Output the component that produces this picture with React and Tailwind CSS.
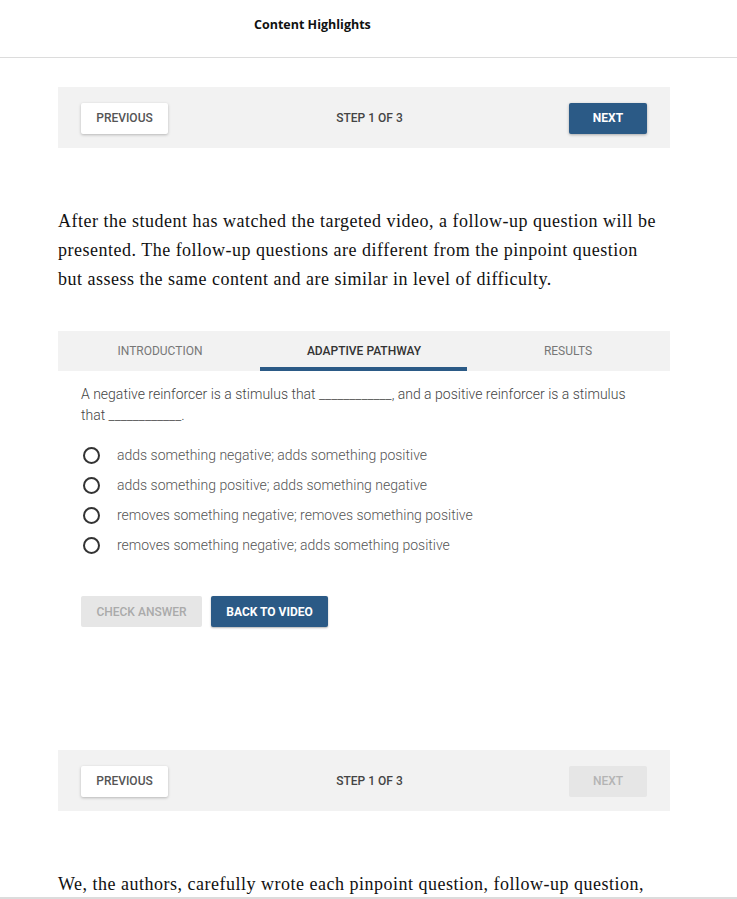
import React from 'react';

const ui = { fontFamily: 'Roboto, "Liberation Sans", sans-serif' };
const serif = { fontFamily: '"Liberation Serif", "DejaVu Serif", serif' };

const StepBar = ({ nextDisabled = false }) => (
  <div className="flex items-center justify-between bg-[#f2f2f2] h-[61px] px-[23px] pt-[1px]" style={ui}>
    <button className="h-[31px] w-[87px] bg-white text-[12px] font-medium text-[#555] shadow-[0_1px_3px_rgba(0,0,0,0.25)] rounded-[2px]">
      PREVIOUS
    </button>
    <span className="text-[12px] font-medium text-[#444] ml-[2px]">STEP 1 OF 3</span>
    {nextDisabled ? (
      <button className="h-[31px] w-[78px] bg-[#e6e6e6] text-[12px] font-medium text-[#b4b4b4] rounded-[2px]">
        NEXT
      </button>
    ) : (
      <button className="h-[31px] w-[78px] bg-[#2b5a86] text-[12px] font-bold text-white shadow-[0_1px_3px_rgba(0,0,0,0.3)] rounded-[2px]">
        NEXT
      </button>
    )}
  </div>
);

const options = [
  'adds something negative; adds something positive',
  'adds something positive; adds something negative',
  'removes something negative; removes something positive',
  'removes something negative; adds something positive'
];

const tabs = ['INTRODUCTION', 'ADAPTIVE PATHWAY', 'RESULTS'];

export default function App() {
  return (
    <div className="h-[899px] flex flex-col bg-white overflow-hidden">
      <div className="flex-1 overflow-hidden">
        {/* Header */}
        <div className="h-[58px] border-b border-[#dcdcdc] pl-[254px] pt-[11px]">
          <span className="text-[12.5px] font-bold text-[#111]" style={{ fontFamily: '"Open Sans", sans-serif' }}>
            Content Highlights
          </span>
        </div>

        <div className="ml-[58px] w-[612px]">
          <div className="mt-[29px]">
            <StepBar />
          </div>

          <p className="mt-[59px] text-[18px] leading-[29px] tracking-[0.5px] text-[#111] w-[604px]" style={serif}>
            After the student has watched the targeted video, a follow-up question will be presented. The follow-up questions are different from the pinpoint question but assess the same content and are similar in level of difficulty.
          </p>

          {/* Question card */}
          <div className="mt-[37px]" style={ui}>
            <div className="grid grid-cols-3 bg-[#f2f2f2] h-[40px]">
              {tabs.map((t, i) => (
                <div key={t} className="relative flex items-center justify-center">
                  <span className={`text-[12px] ${i === 1 ? 'font-medium text-[#333]' : 'text-[#777]'}`}>{t}</span>
                  {i === 1 && <div className="absolute left-[-2px] right-[-1px] bottom-0 h-[4px] bg-[#2b5a86]" />}
                </div>
              ))}
            </div>

            <p className="mt-[13px] px-[23px] text-[14px] leading-[21px] font-light text-[#444]">
              A negative reinforcer is a stimulus that ____________, and a positive reinforcer is a stimulus that ____________.
            </p>

            <div className="mt-[14px] pl-[25px] flex flex-col">
              {options.map((o) => (
                <label key={o} className="flex items-center h-[30px]">
                  <span className="w-[17px] h-[17px] rounded-full border-2 border-[#333] shrink-0" />
                  <span className="ml-[17px] text-[14px] font-light text-[#555]">{o}</span>
                </label>
              ))}
            </div>

            <div className="mt-[36px] px-[23px] flex gap-[9px]">
              <button className="h-[31px] w-[121px] bg-[#e6e6e6] text-[12px] font-medium text-[#aaa] rounded-[2px]">
                CHECK ANSWER
              </button>
              <button className="h-[31px] w-[117px] bg-[#2b5a86] text-[12px] font-bold text-white rounded-[2px] shadow-[0_1px_2px_rgba(0,0,0,0.3)]">
                BACK TO VIDEO
              </button>
            </div>
          </div>

          <div className="mt-[123px]">
            <StepBar nextDisabled />
          </div>

          <p className="mt-[59px] text-[18px] leading-[29px] tracking-[0.5px] text-[#111]" style={serif}>
            We, the authors, carefully wrote each pinpoint question, follow-up question,
          </p>
        </div>
      </div>
      <div className="h-[2px] bg-[#dcdcdc]" />
    </div>
  );
}
